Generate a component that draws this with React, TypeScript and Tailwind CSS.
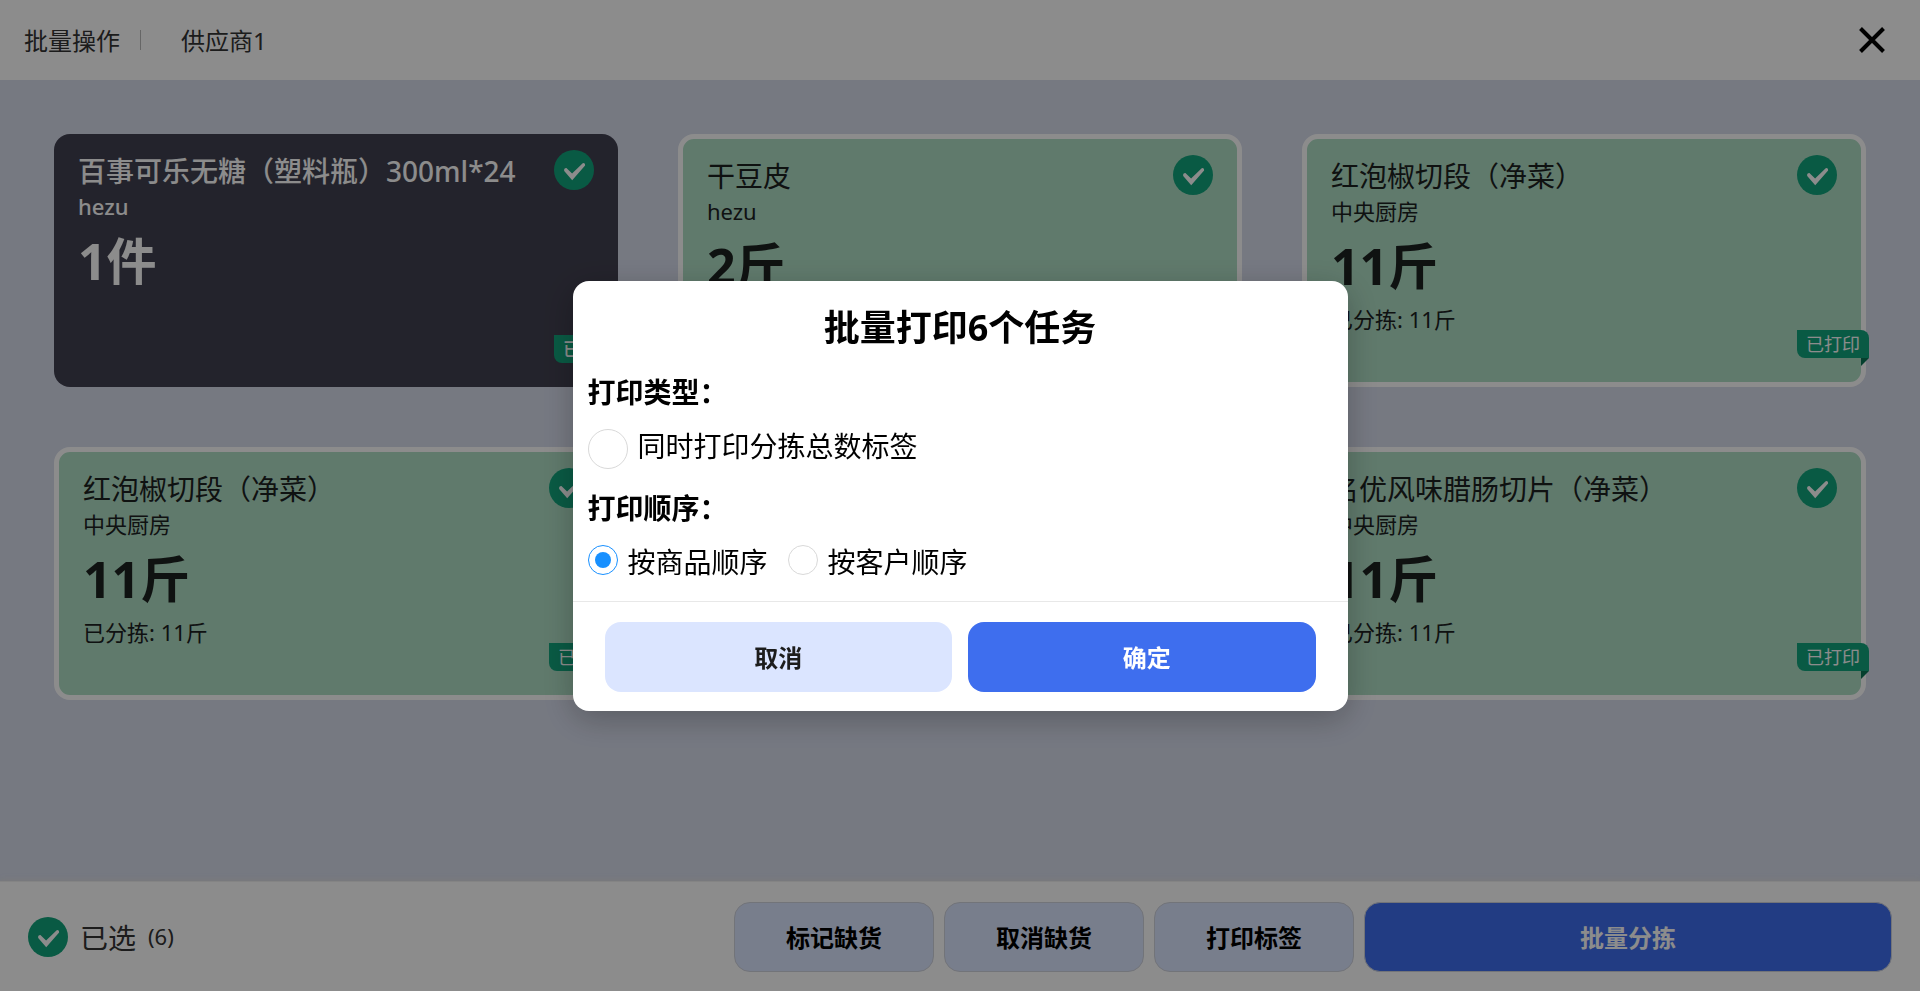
import { useState } from "react";

type Task = {
  name?: string;
  supplier?: string;
  amount?: string;
  sorted?: string;
  dark?: boolean;
};

const tasks: Task[] = [
  { name: "百事可乐无糖（塑料瓶）300ml*24", supplier: "hezu", amount: "1件", dark: true },
  { name: "干豆皮", supplier: "hezu", amount: "2斤" },
  { name: "红泡椒切段（净菜）", supplier: "中央厨房", amount: "11斤", sorted: "11斤" },
  { name: "红泡椒切段（净菜）", supplier: "中央厨房", amount: "11斤", sorted: "11斤" },
  {},
  { name: "名优风味腊肠切片（净菜）", supplier: "中央厨房", amount: "11斤", sorted: "11斤" },
];

function CheckMark() {
  return (
    <svg viewBox="0 0 40 40" className="size-10 shrink-0" aria-hidden="true">
      <circle cx="20" cy="20" r="20" fill="#12a47c" />
      <path
        d="M10.2 21Q9.6 18.2 12.4 18L18.1 23.6L28.7 13.2Q31.6 12.6 31.1 15.6L18.2 30.2Z"
        fill="#fff"
      />
    </svg>
  );
}

function PrintedBadge() {
  return (
    <div className="absolute -right-2 bottom-6 flex h-7 w-[72px] items-center justify-center rounded-tr-lg rounded-bl-lg bg-[#12a47c] text-lg leading-7 text-white">
      已打印
      <svg viewBox="0 0 8 8" className="absolute top-full right-0 size-2" aria-hidden="true">
        <path d="M0 0H8L0 8Z" fill="#087555" />
      </svg>
    </div>
  );
}

function TaskCard({ task }: { task: Task }) {
  const tone = task.dark
    ? "bg-[#414050] font-medium text-white"
    : "border-[5px] border-white bg-[#afdec5] text-[#1c211f]";
  return (
    <li className={`relative h-[253px] rounded-2xl px-6 pt-4 ${tone}`}>
      {task.name && (
        <>
          <div className="flex items-start justify-between">
            <h2 className="text-[28px] leading-[42px]">{task.name}</h2>
            <CheckMark />
          </div>
          <p className="text-[22px] leading-7">{task.supplier}</p>
          <p className="text-[50px] leading-[82px] font-bold">{task.amount}</p>
          {task.sorted && <p className="text-[22px] leading-6">已分拣: {task.sorted}</p>}
          <PrintedBadge />
        </>
      )}
    </li>
  );
}

const footerButton =
  "h-[70px] w-[200px] rounded-2xl border border-[#d0d3dc] bg-[#dbe5ff] pt-0.5 text-2xl font-bold text-black";

const radioStyle =
  "mt-1 grid size-[30px] appearance-none place-content-center rounded-full border border-[#d9d9d9] bg-white before:size-4 before:rounded-full checked:border-[#1890ff] checked:before:bg-[#1890ff]";

export default function App() {
  const [withTotal, setWithTotal] = useState(false);
  const [order, setOrder] = useState("goods");

  return (
    <div className="flex min-h-screen flex-col bg-[#d7dcec] font-['Noto_Sans','Noto_Sans_CJK_SC',sans-serif]">
      <header className="flex h-20 items-center bg-white px-6 text-2xl text-[#333]">
        <span className="pt-0.5">批量操作</span>
        <span className="ml-5 h-5 w-px bg-[#bbb]" />
        <span className="ml-10 pt-0.5">供应商1</span>
        <button type="button" aria-label="关闭" className="ml-auto flex size-12 items-center justify-center">
          <svg viewBox="0 0 28 28" className="size-7" aria-hidden="true">
            <path d="M2.5 2.5 L25.5 25.5 M25.5 2.5 L2.5 25.5" stroke="#000" strokeWidth="4" />
          </svg>
        </button>
      </header>

      <main className="flex-1 px-[54px] pt-[54px] pb-8">
        <ul className="grid grid-cols-3 gap-[60px]">
          {tasks.map((task, i) => (
            <TaskCard key={i} task={task} />
          ))}
        </ul>
      </main>

      <footer className="flex h-[110px] items-center border-t border-[#f0f0f0] bg-white px-7 shadow-[0_-2px_5px_rgba(221,221,221,0.8)]">
        <CheckMark />
        <span className="ml-3 pt-0.5 text-[28px] text-[#333]">已选</span>
        <span className="ml-3 text-[22px] text-[#333]">(6)</span>
        <div className="ml-auto flex gap-2.5">
          <button type="button" className={footerButton}>标记缺货</button>
          <button type="button" className={footerButton}>取消缺货</button>
          <button type="button" className={footerButton}>打印标签</button>
          <button type="button" className="h-[70px] w-[528px] rounded-2xl border border-[#d0d3dc] bg-[#3e6eee] pt-0.5 text-2xl font-bold text-white">
            批量分拣
          </button>
        </div>
      </footer>

      <div className="fixed inset-0 flex items-center justify-center bg-black/45">
        <div
          role="dialog"
          aria-modal="true"
          aria-labelledby="print-title"
          className="w-[775px] rounded-2xl bg-white text-[28px] leading-[42px] text-black shadow-[0_8px_32px_rgba(0,0,0,0.25)]"
        >
          <h1 id="print-title" className="pt-5 text-center text-4xl leading-[54px] font-bold">
            批量打印6个任务
          </h1>
          <div className="px-[15px] pt-4 pb-[18px]">
            <h3 className="font-bold">打印类型：</h3>
            <label className="mt-4 flex w-fit gap-2.5">
              <input
                type="checkbox"
                checked={withTotal}
                onChange={(e) => setWithTotal(e.target.checked)}
                className="size-10 appearance-none rounded-full border border-[#d9d9d9] bg-white checked:bg-[#1890ff]"
              />
              <span className="leading-[34px]">同时打印分拣总数标签</span>
            </label>
            <fieldset className="mt-[18px]">
              <legend className="font-bold">打印顺序：</legend>
              <div className="mt-3 flex gap-5">
                <label className="flex items-start gap-2.5">
                  <input
                    type="radio"
                    name="order"
                    checked={order === "goods"}
                    onChange={() => setOrder("goods")}
                    className={radioStyle}
                  />
                  按商品顺序
                </label>
                <label className="flex items-start gap-2.5">
                  <input
                    type="radio"
                    name="order"
                    checked={order === "customer"}
                    onChange={() => setOrder("customer")}
                    className={radioStyle}
                  />
                  按客户顺序
                </label>
              </div>
            </fieldset>
          </div>
          <div className="grid grid-cols-2 gap-4 border-t border-[#e8e8e8] px-8 pt-5 pb-[19px] text-2xl font-bold">
            <button type="button" className="h-[70px] rounded-2xl bg-[#dbe5ff] pt-0.5 text-[#1c1c1c]">取消</button>
            <button type="button" className="h-[70px] rounded-2xl bg-[#3e6eee] pt-0.5 pl-2.5 text-white">确定</button>
          </div>
        </div>
      </div>
    </div>
  );
}
